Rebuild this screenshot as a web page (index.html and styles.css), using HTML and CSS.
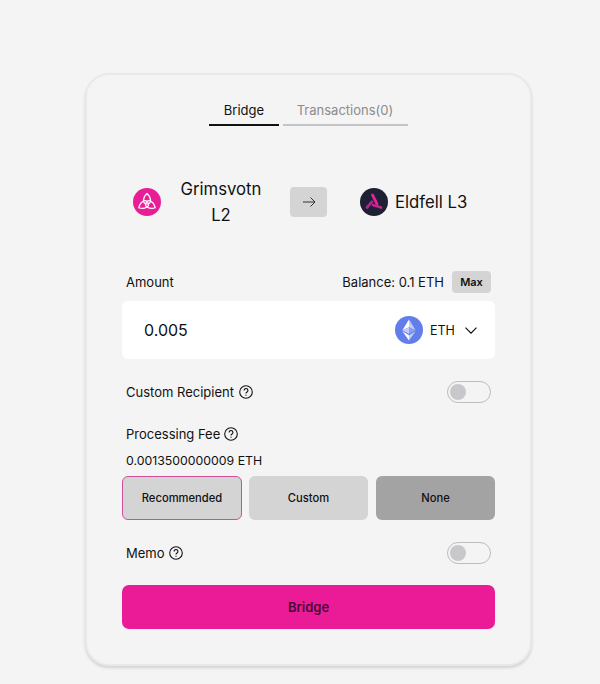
FILE: index.html
```html
<!DOCTYPE html>
<html>
<head>
  <title>Bridge</title>
  <link rel="stylesheet" href="styles.css">
</head>
<body>
  <div class="card">
    <div class="tabs">
      <div class="tab tab-active">Bridge</div>
      <div class="tab tab-idle">Transactions(0)</div>
    </div>

    <div class="chains">
      <div class="chain chain-from">
        <svg class="chain-logo" viewBox="0 0 28 28">
          <circle cx="14" cy="14" r="14" fill="#e91e96"/>
          <g fill="none" stroke="#fff" stroke-width="1.200">
            <path d="M14 5.500C16.300 7.500 17.500 10 17.500 12.500 17.500 14.500 16 16 14 16 12 16 10.500 14.500 10.500 12.500 10.500 10 11.700 7.500 14 5.500z"/>
            <path d="M14 5.500C16.300 7.500 17.500 10 17.500 12.500 17.500 14.500 16 16 14 16 12 16 10.500 14.500 10.500 12.500 10.500 10 11.700 7.500 14 5.500z" transform="rotate(120 14 15)"/>
            <path d="M14 5.500C16.300 7.500 17.500 10 17.500 12.500 17.500 14.500 16 16 14 16 12 16 10.500 14.500 10.500 12.500 10.500 10 11.700 7.500 14 5.500z" transform="rotate(240 14 15)"/>
          </g>
        </svg>
        <div class="chain-name chain-name-wrap">Grimsvotn L2</div>
      </div>
      <div class="arrow-btn">
        <svg width="14" height="12" viewBox="0 0 14 12" fill="none" stroke="#333" stroke-width="1">
          <path d="M1 6h12M8.500 1.500 13 6l-4.500 4.500"/>
        </svg>
      </div>
      <div class="chain chain-to">
        <svg class="chain-logo" viewBox="0 0 28 28">
          <circle cx="14" cy="14" r="14" fill="#1e2033"/>
          <g fill="none" stroke-width="2.800" stroke-linecap="round">
            <path d="M12.500 7 17 16" stroke="#e0249a"/>
            <path d="M7 19.500 11.800 13.800" stroke="#a52a8c"/>
            <path d="M13 17 21 19.500" stroke="#c9218d"/>
          </g>
        </svg>
        <div class="chain-name">Eldfell L3</div>
      </div>
    </div>

    <div class="row amount-head">
      <span class="label">Amount</span>
      <div class="balance">
        <span class="label">Balance: 0.1 ETH</span>
        <span class="max-btn">Max</span>
      </div>
    </div>

    <div class="amount-box">
      <span class="amount-value">0.005</span>
      <div class="token">
        <svg class="token-logo" viewBox="0 0 28 28">
          <circle cx="14" cy="14" r="14" fill="#627eea"/>
          <path d="M14 3.500v7.800l6.600 3z" fill="#c1ccf7"/>
          <path d="M14 3.500 7.400 14.300l6.600-3z" fill="#fff"/>
          <path d="M14 19.300v5.200l6.600-9.200z" fill="#c1ccf7"/>
          <path d="M14 24.500v-5.200l-6.600-4z" fill="#fff"/>
          <path d="M14 18.100l6.600-3.800-6.600-3z" fill="#8a9ff0"/>
          <path d="M7.400 14.300l6.600 3.800v-6.800z" fill="#c1ccf7"/>
        </svg>
        <span class="token-name">ETH</span>
        <svg class="chevron" width="12" height="7" viewBox="0 0 12 7" fill="none" stroke="#111" stroke-width="1.200">
          <path d="M.5.700 6 6.200 11.500.700"/>
        </svg>
      </div>
    </div>

    <div class="row recipient-row">
      <div class="label-help">
        <span class="label">Custom Recipient</span>
        <svg class="help" viewBox="0 0 14 14" fill="none" stroke="#111" stroke-width="1.100">
          <circle cx="7" cy="7" r="6.300"/>
          <path d="M5.100 5.400a1.900 1.900 0 1 1 2.900 1.700c-.7.400-1 .8-1 1.400"/>
          <path d="M7 9.800v1"/>
        </svg>
      </div>
      <div class="toggle"><span class="knob"></span></div>
    </div>

    <div class="label-help fee-head">
      <span class="label">Processing Fee</span>
      <svg class="help" viewBox="0 0 14 14" fill="none" stroke="#111" stroke-width="1.100">
        <circle cx="7" cy="7" r="6.300"/>
        <path d="M5.100 5.400a1.900 1.900 0 1 1 2.900 1.700c-.7.400-1 .8-1 1.400"/>
        <path d="M7 9.800v1"/>
      </svg>
    </div>
    <div class="fee-value">0.0013500000009 ETH</div>

    <div class="fee-options">
      <div class="fee-btn fee-selected">Recommended</div>
      <div class="fee-btn">Custom</div>
      <div class="fee-btn fee-none">None</div>
    </div>

    <div class="row memo-row">
      <div class="label-help memo-label">
        <span class="label">Memo</span>
        <svg class="help" viewBox="0 0 14 14" fill="none" stroke="#111" stroke-width="1.100">
          <circle cx="7" cy="7" r="6.300"/>
          <path d="M5.100 5.400a1.900 1.900 0 1 1 2.900 1.700c-.7.400-1 .8-1 1.400"/>
          <path d="M7 9.800v1"/>
        </svg>
      </div>
      <div class="toggle"><span class="knob"></span></div>
    </div>

    <div class="submit-btn">Bridge</div>
  </div>
</body>
</html>
```

FILE: styles.css
```css
body {
  font-family: 'Inter', sans-serif;
  background-color: #f4f4f4;
  color: #111;
  margin: 0;
  padding: 73px 0 0 85px;
  height: 611px;
  overflow: hidden;
}

.card {
  box-sizing: border-box;
  width: 447px;
  height: 593px;
  padding: 0 37px;
  background-color: #f4f4f4;
  border: 2px solid #e9e9ea;
  border-radius: 24px;
  box-shadow: 0 2px 3px rgba(0,0,0,0.14);
}

.tabs {
  display: flex;
  justify-content: center;
  gap: 4px;
  padding-top: 26px;
  margin-left: -1px;
}

.tab {
  box-sizing: border-box;
  height: 25px;
  font-size: 13px;
  line-height: 18px;
  text-align: center;
}

.tab-active {
  width: 70px;
  padding-left: 1px;
  border-bottom: 2px solid #111;
}

.tab-idle {
  width: 125px;
  color: #8b8b90;
  border-bottom: 2px solid #c4c4c6;
}

.chains {
  display: flex;
  align-items: center;
  margin: 38px 0 0 9px;
  height: 76px;
}

.chain {
  display: flex;
  align-items: center;
}

.chain-from {
  width: 157px;
}

.chain-to {
  margin-left: 33px;
  gap: 7px;
}

.chain-logo {
  width: 28px;
  height: 28px;
  flex: none;
}

.chain-name {
  font-size: 16.7px;
  line-height: 26px;
  white-space: nowrap;
}

.chain-name-wrap {
  width: 100px;
  margin-left: 10px;
  white-space: normal;
  text-align: center;
}

.arrow-btn {
  display: flex;
  align-items: center;
  justify-content: center;
  width: 37px;
  height: 30px;
  background: #d4d4d4;
  border-radius: 4px;
}

.row {
  display: flex;
  align-items: center;
  justify-content: space-between;
}

.label {
  font-size: 13px;
  line-height: 18px;
  white-space: nowrap;
}

.amount-head {
  margin: 31px 2px 0;
  height: 22px;
}

.balance {
  display: flex;
  align-items: center;
  gap: 8px;
}

.max-btn {
  width: 39px;
  height: 22px;
  background: #d4d4d4;
  border-radius: 4px;
  font-size: 11px;
  font-weight: 600;
  line-height: 22px;
  text-align: center;
}

.amount-box {
  display: flex;
  align-items: center;
  justify-content: space-between;
  height: 58px;
  margin: 8px -2px 0;
  padding: 0 18px 0 22px;
  background: #fff;
  border-radius: 6px;
}

.amount-value {
  font-size: 16px;
}

.token {
  display: flex;
  align-items: center;
}

.token-logo {
  width: 28px;
  height: 28px;
}

.token-name {
  width: 35px;
  margin-left: 7px;
  font-size: 12.5px;
}

.recipient-row {
  margin: 22px 2px 0;
  height: 22px;
}

.label-help {
  display: flex;
  align-items: center;
  gap: 5px;
}

.memo-label {
  gap: 4px;
}

.help {
  width: 14px;
  height: 14px;
}

.toggle {
  box-sizing: border-box;
  width: 44px;
  height: 22px;
  padding: 2px;
  border: 1px solid #bdbdbf;
  border-radius: 11px;
}

.knob {
  display: block;
  width: 16px;
  height: 16px;
  border-radius: 50%;
  background: #c8c8cc;
}

.fee-head {
  margin: 20px 2px 0;
  height: 22px;
  gap: 4px;
}

.fee-value {
  margin: 7px 2px 0;
  font-size: 12.3px;
  line-height: 18px;
}

.fee-options {
  display: grid;
  grid-template-columns: 120px 119px 120px;
  gap: 7px;
  margin: 6px -2px 0;
}

.fee-btn {
  height: 44px;
  box-sizing: border-box;
  background: #d4d4d4;
  border-radius: 6px;
  font-size: 11.2px;
  font-weight: 500;
  line-height: 44px;
  text-align: center;
}

.fee-selected {
  border: 1px solid #cf4f9c;
  line-height: 42px;
}

.fee-none {
  margin-left: 1px;
  background: #a3a3a3;
}

.memo-row {
  margin: 22px 2px 0;
  height: 22px;
}

.submit-btn {
  height: 44px;
  margin: 21px -2px 0;
  background: #eb1b97;
  border-radius: 7px;
  color: #4a0a35;
  font-size: 13px;
  font-weight: 600;
  line-height: 44px;
  text-align: center;
}
```
